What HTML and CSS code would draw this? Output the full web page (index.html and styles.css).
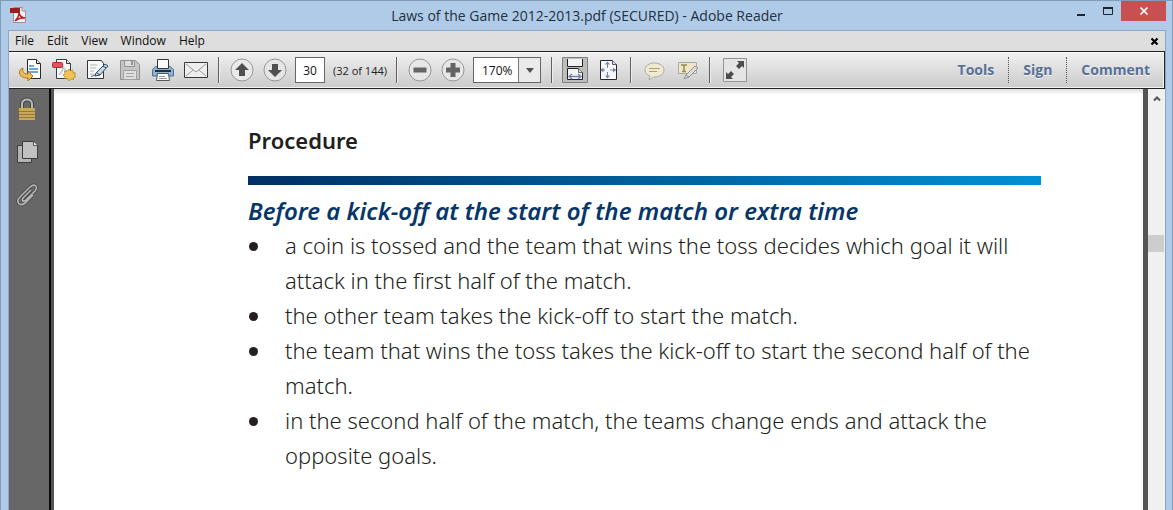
FILE: index.html
```html
<!DOCTYPE html>
<html lang="en">
<head>
<meta charset="utf-8">
<title>Laws of the Game 2012-2013.pdf (SECURED) - Adobe Reader</title>
<link rel="stylesheet" href="styles.css">
</head>
<body>
<div class="window">
  <header class="titlebar">
    <svg class="app-icon" width="18" height="18" viewBox="0 0 18 18"><path d="M3.500 1.500h9l3 3v12h-12z" fill="#f4f0f0" stroke="#9a8f96"/><path d="M12 1v4h4" fill="#ddd" stroke="#9a8f96"/><path d="M0 2h10v5H0z" fill="#9c1d20"/><path d="M5 15c2-2 4-5 4-8 1 3 3 5 6 5-4-1-7 1-10 3z" fill="none" stroke="#c01c22" stroke-width="1.5"/></svg>
    <h1 class="title">Laws of the Game 2012-2013.pdf (SECURED) - Adobe Reader</h1>
    <div class="controls">
      <button class="control" aria-label="Minimize"><svg width="12" height="12"><path d="M2 10h8" stroke="#1c2430" stroke-width="2"/></svg></button>
      <button class="control" aria-label="Maximize"><svg width="12" height="12"><path d="M1.500 3v6.500h9V3" fill="none" stroke="#1c2430"/><path d="M1 3h10" stroke="#1c2430" stroke-width="2"/></svg></button>
      <button class="control close" aria-label="Close"><svg width="10" height="10"><path d="M1.500 1.500l7 7m0-7l-7 7" stroke="#fff" stroke-width="1.700"/></svg></button>
    </div>
  </header>
  <div class="client">
    <nav class="menubar">
      <button class="menu">File</button><button class="menu">Edit</button><button class="menu">View</button><button class="menu">Window</button><button class="menu">Help</button>
      <button class="close-doc" aria-label="Close document"><svg width="9" height="9"><path d="M1.500 1.500l6 6m0-6l-6 6" stroke="#000" stroke-width="2.200"/></svg></button>
    </nav>
    <div class="toolbar">
      <button class="tool" aria-label="Open"><svg width="24" height="24" viewBox="0 0 24 24"><path d="M8.500 1.500h9l4 4v15h-13z" fill="#fbfdff" stroke="#26292e"/><path d="M17.500 1.500v4h4" fill="#ddd" stroke="#26292e"/><path d="M10 8h5m-5 3h9m-9 3h9" stroke="#438bc5" stroke-width="1.500"/><path d="M4 10C1 11 0 13 .500 15c1 4 4 5 8.500 5v3l5-5-5-5v3c-4 0-6-2-5-6z" fill="#edbd54" stroke="#a77822"/></svg></button>
      <button class="tool" aria-label="Create PDF"><svg width="24" height="24" viewBox="0 0 24 24"><path d="M4.500 1.500h10l4 4v15h-14z" fill="#f5f5f5" stroke="#35383c"/><path d="M14.500 1.500v4h4" fill="#ddd" stroke="#35383c"/><path d="M7 17c3-3 4-6 4-9 1 3 3 5 5 5" fill="none" stroke="#c5c5c5" stroke-width="1.500"/><rect x=".5" y="4.500" width="10" height="5" rx="1" fill="#e65358" stroke="#b5272e"/><path d="M17 11l1.500 2 2-1 .5 2.500 2.500.5-1 2 1.500 1.500-2.500 1v2l-2.500-.5-2 2-1.500-2.500-2.500.5v-2.500l-2-1.500 2-1.500-.5-2.500 2.500.5z" fill="#f2c353" stroke="#a97b26" stroke-width=".700"/></svg></button>
      <button class="tool" aria-label="Sign document"><svg width="24" height="24" viewBox="0 0 24 24"><path d="M2.500 2.500h14l2 3v15h-16z" fill="#f8f8f8" stroke="#303338"/><path d="M5 7h7m-7 3h6m-6 3h4m-4 3h4" stroke="#b1b3b5"/><path d="M11 15l9-9 3 2-8 9-5 1z" fill="#c5d6e5" stroke="#344a61"/><path d="M12 15l3 2m3-9l3 2M6 18c2 1 3-2 5 0" fill="none" stroke="#344a61"/></svg></button>
      <button class="tool" aria-label="Save" disabled><svg width="24" height="24" viewBox="0 0 24 24"><path d="M2.500 2.500h15l4 4v15h-19z" fill="#c5c5c5" stroke="#919191"/><path d="M6.500 2.500h10v6h-10z" fill="#ddd" stroke="#919191"/><path d="M13 3h2v4h-2z" fill="#929292"/><path d="M5.500 12.500h13v9h-13z" fill="#dfdfdf" stroke="#a1a1a1"/><path d="M8 15.500h8m-8 3h8" stroke="#a8a8a8"/></svg></button>
      <button class="tool" aria-label="Print"><svg width="24" height="24" viewBox="0 0 24 24"><path d="M5 8.500h14l3.500 3v6.500h-21v-6.500z" fill="#8fb3d0" stroke="#4b7193"/><path d="M6.500 1.500h11v9h-11z" fill="#fafafa" stroke="#33363a"/><path d="M4 13h16" stroke="#1c3044" stroke-width="2"/><path d="M6.500 15.500h11l1 7h-13z" fill="#fafafa" stroke="#55595d"/><path d="M8 18.500h6m-6 2h8" stroke="#999"/></svg></button>
      <button class="tool" aria-label="Email"><svg width="24" height="24" viewBox="0 0 24 24"><path d="M.5 4.500h23v15H.5z" fill="#eee" stroke="#35383c"/><path d="M2 6l10 8L22 6M2 18l7-6m13 6l-7-6" fill="none" stroke="#999"/></svg></button>
      <span class="separator"></span>
      <button class="tool" aria-label="Previous page"><svg width="24" height="24" viewBox="0 0 24 24"><circle cx="12" cy="12" r="11" fill="#e9e9e9" stroke="#979797"/><path d="M12 5l7 7h-4v6H9v-6H5z" fill="#505050"/></svg></button>
      <button class="tool" aria-label="Next page"><svg width="24" height="24" viewBox="0 0 24 24"><circle cx="12" cy="12" r="11" fill="#e5e5e5" stroke="#979797"/><path d="M12 19l7-7h-4V6H9v6H5z" fill="#505050"/></svg></button>
      <input class="page-number" id="page" type="text" value="30">
      <label class="page-total" for="page">(32 of 144)</label>
      <span class="separator"></span>
      <button class="tool" aria-label="Zoom out"><svg width="24" height="24" viewBox="0 0 24 24"><circle cx="12" cy="12" r="11" fill="#e7e7e7" stroke="#979797"/><path d="M5.500 9.500h13v5h-13z" fill="#656565"/></svg></button>
      <button class="tool" aria-label="Zoom in"><svg width="24" height="24" viewBox="0 0 24 24"><circle cx="12" cy="12" r="11" fill="#e7e7e7" stroke="#979797"/><path d="M9.500 5h5v4.500H19v5h-4.500V19h-5v-4.500H5v-5h4.500z" fill="#656565"/></svg></button>
      <div class="zoom">
        <select class="zoom-select" aria-label="Zoom level"><option>170%</option><option>200%</option></select>
        <span class="zoom-arrow"><svg width="8" height="5"><path d="M0 0h8L4 5z" fill="#505050"/></svg></span>
      </div>
      <span class="separator"></span>
      <button class="tool" aria-label="Scrolling mode"><svg width="26" height="26" viewBox="0 0 26 26"><path d="M.5.500h25v25H.5z" fill="#bdbdbd" stroke="#808080"/><path d="M5.500 2v7.500h15V2" fill="#f3f3f3" stroke="#222" /><path d="M5.500 22.500v-11h11l4 4v7z" fill="#f3f3f3" stroke="#222"/><path d="M16.500 11.500v4h4" fill="#ddd" stroke="#666"/><path d="M7 19.500h12M10 17l-3 2.500 3 2.500m6-5l3 2.500-3 2.500" fill="none" stroke="#7482b0" stroke-width="1.300"/></svg></button>
      <button class="tool" aria-label="Fit page"><svg width="24" height="24" viewBox="0 0 24 24"><path d="M4.500 2.500h12l4 4v15h-16z" fill="#f7f8fb" stroke="#26282d"/><path d="M16.500 2.500v4h4" fill="#ddd" stroke="#555"/><path d="M11.500 4v6m0 4v6M5 12h4m5 0h6" stroke="#7482b0"/><path d="M9 6.500L11.500 3.500 14 6.500zM9 17.500l2.500 3 2.500-3zM7.500 9.500L4.500 12l3 2.500zM17 9.500l3 2.500-3 2.500z" fill="#7482b0"/></svg></button>
      <span class="separator"></span>
      <button class="tool" aria-label="Add comment" disabled><svg width="24" height="24" viewBox="0 0 24 24"><path d="M12 5c6 0 10 3 10 7s-4 7-10 7l-5 3 1-4c-3-1-5-3-5-6 0-4 4-7 9-7z" fill="#efe9cf" stroke="#aaa"/><path d="M7 10.500h11M7 13.500h8" stroke="#aaa079"/></svg></button>
      <button class="tool" aria-label="Highlight text" disabled><svg width="24" height="24" viewBox="0 0 24 24"><path d="M3.500 4.500h18v11h-18z" fill="#eee7c7" stroke="#aaa"/><path d="M6 7h6M9 7v6m-2 .5h4" fill="none" stroke="#9a8b4d" stroke-width="1.500"/><path d="M9 21l2-4 9-9 3 2-9 9z" fill="#ddd" stroke="#919191"/><path d="M11 17l3 2" stroke="#919191"/></svg></button>
      <span class="separator"></span>
      <button class="tool read" aria-label="Read mode"><svg width="24" height="24" viewBox="0 0 24 24"><path d="M.5.500h23v23H.5z" fill="#e5e5e5" stroke="#949494"/><path d="M14 3h7v7l-2-2-3 3-3-3 3-3zM3 21v-7l2 2 3-3 3 3-3 3 2 2z" fill="#4d4d4d"/></svg></button>
      <div class="panes"><button class="pane">Tools</button><button class="pane">Sign</button><button class="pane">Comment</button></div>
    </div>
    <div class="workspace">
      <aside class="sidebar">
        <button class="side" aria-label="Security settings"><svg width="22" height="24" viewBox="0 0 22 24"><path d="M6 12V7c0-6 10-6 10 0v5" fill="none" stroke="#444" stroke-width="4"/><path d="M6 12V7c0-6 10-6 10 0v5" fill="none" stroke="#b9b9b9" stroke-width="2"/><path d="M3 11h16v12H3z" fill="#c9a85d"/><path d="M3 14.500h16m-16 3h16m-16 3h16" stroke="#94783b"/></svg></button>
        <button class="side" aria-label="Page thumbnails"><svg width="22" height="24" viewBox="0 0 22 24"><path d="M1.500 5.500h14v17h-14z" fill="#b4b4b4" stroke="#3c3c3c"/><path d="M6.500 1.500h11l4 4v13h-15z" fill="#c1c1c1" stroke="#3c3c3c"/><path d="M17.500 1.500v4h4" fill="#eee" stroke="#555"/></svg></button>
        <button class="side" aria-label="Attachments"><svg width="22" height="24" viewBox="0 0 22 24"><path d="M15 7l-8 8c-2 3 1 4 3 2l9-9c4-5-1-8-5-4l-10 10c-5 5 0 10 5 6l8-8" fill="none" stroke="#404040" stroke-width="3"/><path d="M15 7l-8 8c-2 3 1 4 3 2l9-9c4-5-1-8-5-4l-10 10c-5 5 0 10 5 6l8-8" fill="none" stroke="#b5b5b5" stroke-width="1.700"/></svg></button>
      </aside>
      <main class="page">
        <article class="document">
          <h2 class="heading">Procedure</h2>
          <div class="rule"></div>
          <h3 class="subheading">Before a kick-off at the start of the match or extra time</h3>
          <ul class="list">
            <li>a coin is tossed and the team that wins the toss decides which goal it will<br>attack in the first half of the match.</li>
            <li>the other team takes the kick-off to start the match.</li>
            <li>the team that wins the toss takes the kick-off to start the second half of the<br>match.</li>
            <li>in the second half of the match, the teams change ends and attack the<br>opposite goals.</li>
          </ul>
        </article>
      </main>
      <div class="scrollbar">
        <button class="scroll-up" aria-label="Scroll up"><svg width="8" height="7"><path d="M1 5.500l3-3 3 3" fill="none" stroke="#555" stroke-width="2"/></svg></button>
        <div class="thumb"></div>
      </div>
    </div>
  </div>
</div>
</body>
</html>
```
FILE: styles.css
```css
* { box-sizing: border-box; }
body { margin: 0; font-family: "Open Sans", "Noto Sans", sans-serif; color: #231f20; }
button { border: 0; padding: 0; margin: 0; background: none; font: inherit; color: inherit; }
svg { display: block; }
.window { display: flex; flex-direction: column; height: 100vh; overflow: hidden; padding: 0 6px 0 7px; background: #b0cbe8; border: solid #819bbb; border-width: 1px 1px 0; }
.titlebar { display: grid; grid-template-columns: 1fr auto 1fr; height: 29px; flex: none; }
.app-icon { margin: 5px 0 0 2px; }
.title { margin: 0; font-size: 14px; line-height: 29px; font-weight: 400; white-space: nowrap; color: #22303f; }
.controls { display: flex; justify-content: flex-end; align-items: flex-start; }
.control { display: flex; align-items: center; justify-content: center; width: 27px; height: 20px; }
.control.close { width: 45px; background: #c75050; }
.client { flex: 1; min-height: 0; display: flex; flex-direction: column; border: 1px solid #8ba7c5; border-bottom: 0; }
.menubar { display: flex; align-items: center; height: 20px; flex: none; padding: 0 6px; background: #dedede; font-size: 12px; line-height: 18px; color: #111; gap: 13px; }
.close-doc { margin-left: auto; }
.toolbar { display: flex; align-items: center; flex: none; height: 38px; padding-left: 5px; border: 1px solid #222; border-left-width: 0; background: linear-gradient(#f0f0f0, #cbcbcb); box-shadow: inset 0 1px #fff, inset -1px -1px #f2f2f2; }
.tool { display: flex; align-items: center; justify-content: center; width: 33px; height: 28px; flex: none; }
.tool.read { width: 37px; }
.separator { width: 2px; height: 26px; flex: none; margin: 0 5px 0 6px; background: #606060; border-right: 1px solid #eee; }
.page-number { width: 30px; height: 26px; margin: 0 4px; padding: 0; border: 1px solid #666; background: #fff; text-align: center; font: 12px "Open Sans", sans-serif; color: #111; }
.page-total { width: 61px; padding-left: 4px; font-size: 11px; white-space: nowrap; color: #222; }
.zoom { position: relative; width: 68px; height: 26px; margin: 0 4px; flex: none; }
.zoom-select { appearance: none; width: 100%; height: 100%; padding: 0 26px 0 8px; border: 1px solid #666; border-radius: 0; background: #fff; font: 12px "Open Sans", sans-serif; color: #111; }
.zoom-arrow { position: absolute; top: 1px; right: 1px; bottom: 1px; width: 22px; display: flex; align-items: center; justify-content: center; background: #eaeaea; border-left: 1px solid #777; pointer-events: none; }
.panes { display: flex; margin-left: auto; }
.pane { padding: 0 14px; border-left: 1px dotted #555; font-size: 14px; line-height: 26px; font-weight: 700; color: #587095; text-shadow: 0 1px #f4f4f4; }
.pane:first-child { border-left: 0; }
.workspace { flex: 1; min-height: 0; display: flex; background: #555; }
.sidebar { width: 42px; flex: none; display: flex; flex-direction: column; align-items: center; gap: 19px; padding: 8px 4px 0 0; background: #676767; border-right: 2px solid #080808; }
.page { flex: 1; min-width: 0; margin: 0 5px 0 3px; padding: 35px 102px 0 194px; background: linear-gradient(#e0e0e0, #fff 6px); overflow: hidden; font-family: "Noto Sans", "Open Sans", sans-serif; font-variant-ligatures: none; }
.heading { margin: 0; font-size: 22px; line-height: 32px; font-weight: 600; }
.rule { height: 9px; margin: 20px 0 8px; background: linear-gradient(90deg, #002f62, #0090d4); }
.subheading { margin: 0; font-size: 24px; line-height: 35px; font-weight: 600; font-style: italic; color: #06366a; white-space: nowrap; }
.list { margin: 0; padding-left: 37px; font-size: 22px; line-height: 35px; font-weight: 300; white-space: nowrap; }
.list li { list-style: none; position: relative; }
.list li::before { content: ""; position: absolute; left: -36px; top: 14px; width: 9px; height: 9px; border-radius: 50%; background: #231f20; }
.scrollbar { width: 17px; flex: none; background: #f0f0f0; }
.scroll-up { display: flex; align-items: center; justify-content: center; width: 100%; height: 19px; }
.thumb { height: 17px; margin: 127px 1px 0 0; background: #cdcdcd; }
```
